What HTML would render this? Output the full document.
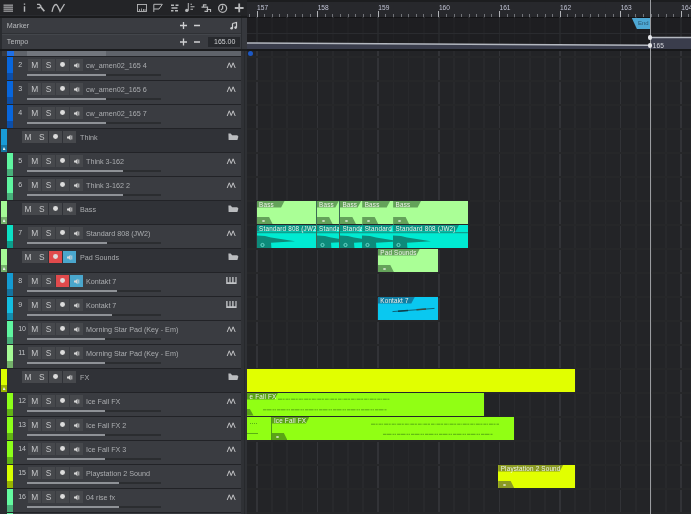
<!DOCTYPE html><html><head><meta charset="utf-8"><style>
*{margin:0;padding:0;box-sizing:border-box}
html,body{width:691px;height:514px;overflow:hidden;background:#222326;font-family:"Liberation Sans",sans-serif}
.a{position:absolute}
.btn{position:absolute;width:13px;height:12.5px;background:#46484c;color:#c4c5c7;font-size:8.4px;line-height:13px;text-align:center}
.nm{position:absolute;color:#abadb0;font-size:7.2px;letter-spacing:0px;white-space:nowrap;line-height:10px}
.num{position:absolute;color:#c2c4c7;font-size:7px;white-space:nowrap;line-height:10px}
.lbl{position:absolute;font-size:6.3px;letter-spacing:0.2px;white-space:nowrap;line-height:8px;color:#eef2ea}
</style></head><body>
<div style="position:absolute;left:0;top:0;width:691px;height:514px;overflow:hidden;will-change:transform;filter:blur(0.7px)">

<div class="a" style="left:0;top:0;width:241px;height:514px;background:#2a2c30"></div>
<div class="a" style="left:0;top:0;width:247px;height:15px;background:#232427"></div>
<div class="a" style="left:0;top:15.5px;width:247px;height:2.5px;background:#1a1b1d"></div>
<svg class="a" style="left:0;top:0" width="247" height="15" viewBox="0 0 247 15">
<g fill="none" stroke="#b6b7b9" stroke-width="1.1">
</g><g fill="#b6b7b9"><rect x="3.5" y="4.6" width="9.5" height="1.1"/><rect x="3.5" y="6.6" width="9.5" height="1.1"/><rect x="3.5" y="8.6" width="9.5" height="1.1"/><rect x="3.5" y="10.6" width="9.5" height="1.1"/></g><g fill="none" stroke="#b6b7b9" stroke-width="1.1">
<path d="M24.5 3.5V4.8M24.5 6.2V11.8" stroke-width="1.4"/>
<path d="M37 4.4 H39.4 L40.9 6.1 L39.4 7.8 H37.2" stroke-width="1.3"/><path d="M40.6 6.9 L44.4 11.2" stroke-width="1.7"/>
<path d="M52 11.8 C53 7 54.5 4.5 56 4.5 C57.5 4.5 58.5 8 60 11.3 L64.5 4" stroke-width="1.3"/>
<rect x="137.5" y="4.5" width="9" height="7" stroke-width="0.9"/>
<path d="M139.5 11V9M141.5 11V8.5M143.5 11V9M145 11V9" stroke-width="0.8"/>
<path d="M153.8 12V4.3H162.3L159 9H154" stroke-width="1.0"/>
<path d="M171 5.2H174M175.5 5.2H178.5M171.5 8H177.5M171 10.8H173.5M175 10.8H178" stroke-width="1.6" stroke-dasharray="none"/>
<path d="M188.3 3V10.5" stroke-width="1.0"/><circle cx="186.8" cy="10.4" r="1.7" fill="#b6b7b9" stroke="none"/>
<path d="M190.5 4.2H192M190.5 6.8H194.5M190.5 9.2H193" stroke-width="1.1"/>
<path d="M201.5 7.2H207.5V11.3H204.5M203.5 7.2V4.8H206.5M206.5 9.5H210.5V12" stroke-width="1.2"/>
<circle cx="222.6" cy="8.3" r="4.0" stroke-width="1.3"/><path d="M222.6 5.4V8.5L220.9 10.2" stroke-width="1.2"/>
<path d="M239.2 3.6V12.2M234.8 8H243.6" stroke-width="1.8"/>
</g></svg>
<div class="a" style="left:2px;top:18px;width:239px;height:31px;background:#3a3c41"></div>
<div class="a" style="left:2px;top:32.8px;width:239px;height:1.2px;background:#2f3135"></div>
<div class="a" style="left:2px;top:34px;width:239px;height:1px;background:#43464b"></div>
<div class="a" style="left:0;top:48.5px;width:247px;height:2.5px;background:#1b1c1e"></div>
<div class="nm" style="left:6.8px;top:21.3px;color:#b8babd">Marker</div>
<div class="nm" style="left:6.8px;top:37.3px;color:#b8babd">Tempo</div>
<svg class="a" style="left:175px;top:17px" width="66" height="32" viewBox="0 0 66 32"><g stroke="#cfd0d2" stroke-width="1.3" fill="none">
<path d="M5 8.5H12M8.5 5V12M19 8.5H25"/>
<path d="M5 25H12M8.5 21.5V28.5M19 25H25"/>
<path d="M57.5 6.5L61.5 5.5V10.5M57.5 6.5V11.2" stroke-width="1.2"/></g>
<circle cx="56.6" cy="11.3" r="1.3" fill="#cfd0d2"/><circle cx="60.6" cy="10.6" r="1.3" fill="#cfd0d2"/></svg>
<div class="a" style="left:208px;top:37px;width:32px;height:10px;background:#27292d"></div>
<div class="nm" style="left:214px;top:37px;font-size:7px;color:#d0d2d5">165.00</div>
<div class="a" style="left:2px;top:51px;width:239px;height:5px;background:#393b3f"></div>
<div class="a" style="left:7px;top:51px;width:6.5px;height:5px;background:#1f6fe6"></div>
<div class="a" style="left:14px;top:51px;width:227px;height:4.5px;background:#5f636a"></div>
<div class="a" style="left:27px;top:51px;width:79px;height:4.5px;background:#72767d"></div>
<div class="a" style="left:2px;top:56px;width:239px;height:24px;background:#3a3c41"></div>
<div class="a" style="left:0;top:56px;width:241px;height:1px;background:#222327"></div>
<div class="a" style="left:0;top:56px;width:7px;height:24px;background:#2b2d32"></div>
<div class="a" style="left:7px;top:57px;width:6.3px;height:23px;background:#0866dc"></div>
<div class="a" style="left:7px;top:73px;width:6.3px;height:7px;background:#0c4ea8"></div>
<div class="num" style="left:18.2px;top:59.6px">2</div>
<div class="btn" style="left:28.2px;top:58.5px;background:#46484c">M</div>
<div class="btn" style="left:42px;top:58.5px;background:#46484c">S</div>
<div class="btn" style="left:55.8px;top:58.5px;background:#46484c"><div class="a" style="left:3.8px;top:3.6px;width:5.4px;height:5.2px;border-radius:50%;background:#dcdcdc"></div></div>
<div class="btn" style="left:69.6px;top:58.5px;background:#46484c"><svg class="a" style="left:3px;top:3px" width="7" height="7" viewBox="0 0 7 7"><path d="M1 2.5H2.5L4.5 0.8V6.2L2.5 4.5H1Z" fill="#d6d6d6"/><path d="M5.8 1.5V5.5" stroke="#d6d6d6" stroke-width="0.9"/></svg></div>
<div class="nm" style="left:86px;top:60.5px">cw_amen02_165 4</div>
<div class="a" style="left:27px;top:74px;width:134px;height:2.3px;background:#2b2d30"></div>
<div class="a" style="left:27px;top:74px;width:79px;height:2.3px;background:#8f9297"></div>
<svg class="a" style="left:225px;top:59px" width="13" height="12" viewBox="0 0 13 12"><path d="M2.2 9 L4.3 3.8 L6.2 8.6 L8.1 3.8 L10.2 9" fill="none" stroke="#c0c1c3" stroke-width="1.0"/></svg>
<div class="a" style="left:2px;top:80px;width:239px;height:24px;background:#3a3c41"></div>
<div class="a" style="left:0;top:80px;width:241px;height:1px;background:#222327"></div>
<div class="a" style="left:0;top:80px;width:7px;height:24px;background:#2b2d32"></div>
<div class="a" style="left:7px;top:81px;width:6.3px;height:23px;background:#0866dc"></div>
<div class="a" style="left:7px;top:97px;width:6.3px;height:7px;background:#0c4ea8"></div>
<div class="num" style="left:18.2px;top:83.6px">3</div>
<div class="btn" style="left:28.2px;top:82.5px;background:#46484c">M</div>
<div class="btn" style="left:42px;top:82.5px;background:#46484c">S</div>
<div class="btn" style="left:55.8px;top:82.5px;background:#46484c"><div class="a" style="left:3.8px;top:3.6px;width:5.4px;height:5.2px;border-radius:50%;background:#dcdcdc"></div></div>
<div class="btn" style="left:69.6px;top:82.5px;background:#46484c"><svg class="a" style="left:3px;top:3px" width="7" height="7" viewBox="0 0 7 7"><path d="M1 2.5H2.5L4.5 0.8V6.2L2.5 4.5H1Z" fill="#d6d6d6"/><path d="M5.8 1.5V5.5" stroke="#d6d6d6" stroke-width="0.9"/></svg></div>
<div class="nm" style="left:86px;top:84.5px">cw_amen02_165 6</div>
<div class="a" style="left:27px;top:98px;width:134px;height:2.3px;background:#2b2d30"></div>
<div class="a" style="left:27px;top:98px;width:79px;height:2.3px;background:#8f9297"></div>
<svg class="a" style="left:225px;top:83px" width="13" height="12" viewBox="0 0 13 12"><path d="M2.2 9 L4.3 3.8 L6.2 8.6 L8.1 3.8 L10.2 9" fill="none" stroke="#c0c1c3" stroke-width="1.0"/></svg>
<div class="a" style="left:2px;top:104px;width:239px;height:24px;background:#3a3c41"></div>
<div class="a" style="left:0;top:104px;width:241px;height:1px;background:#222327"></div>
<div class="a" style="left:0;top:104px;width:7px;height:24px;background:#2b2d32"></div>
<div class="a" style="left:7px;top:105px;width:6.3px;height:23px;background:#0866dc"></div>
<div class="a" style="left:7px;top:121px;width:6.3px;height:7px;background:#0c4ea8"></div>
<div class="num" style="left:18.2px;top:107.6px">4</div>
<div class="btn" style="left:28.2px;top:106.5px;background:#46484c">M</div>
<div class="btn" style="left:42px;top:106.5px;background:#46484c">S</div>
<div class="btn" style="left:55.8px;top:106.5px;background:#46484c"><div class="a" style="left:3.8px;top:3.6px;width:5.4px;height:5.2px;border-radius:50%;background:#dcdcdc"></div></div>
<div class="btn" style="left:69.6px;top:106.5px;background:#46484c"><svg class="a" style="left:3px;top:3px" width="7" height="7" viewBox="0 0 7 7"><path d="M1 2.5H2.5L4.5 0.8V6.2L2.5 4.5H1Z" fill="#d6d6d6"/><path d="M5.8 1.5V5.5" stroke="#d6d6d6" stroke-width="0.9"/></svg></div>
<div class="nm" style="left:86px;top:108.5px">cw_amen02_165 7</div>
<div class="a" style="left:27px;top:122px;width:134px;height:2.3px;background:#2b2d30"></div>
<div class="a" style="left:27px;top:122px;width:79px;height:2.3px;background:#8f9297"></div>
<svg class="a" style="left:225px;top:107px" width="13" height="12" viewBox="0 0 13 12"><path d="M2.2 9 L4.3 3.8 L6.2 8.6 L8.1 3.8 L10.2 9" fill="none" stroke="#c0c1c3" stroke-width="1.0"/></svg>
<div class="a" style="left:2px;top:128px;width:239px;height:24px;background:#303237"></div>
<div class="a" style="left:0;top:128px;width:241px;height:1px;background:#222327"></div>
<div class="a" style="left:1px;top:129px;width:5.8px;height:23px;background:#199bd7"></div>
<div class="a" style="left:1px;top:145px;width:5.8px;height:7px;background:#1676a4"></div>
<div class="a" style="left:2.5px;top:147px;width:3px;height:3px;background:#e8f0f0;clip-path:polygon(50% 0,100% 100%,0 100%)"></div>
<div class="btn" style="left:21.6px;top:130.5px;background:#46484c">M</div>
<div class="btn" style="left:35.4px;top:130.5px;background:#46484c">S</div>
<div class="btn" style="left:49.2px;top:130.5px;background:#46484c"><div class="a" style="left:3.8px;top:3.6px;width:5.4px;height:5.2px;border-radius:50%;background:#dcdcdc"></div></div>
<div class="btn" style="left:63.0px;top:130.5px;background:#46484c"><svg class="a" style="left:3px;top:3px" width="7" height="7" viewBox="0 0 7 7"><path d="M1 2.5H2.5L4.5 0.8V6.2L2.5 4.5H1Z" fill="#d6d6d6"/><path d="M5.8 1.5V5.5" stroke="#d6d6d6" stroke-width="0.9"/></svg></div>
<div class="nm" style="left:80px;top:132.5px">Think</div>
<svg class="a" style="left:227.5px;top:133px" width="11" height="8" viewBox="0 0 11 8"><path d="M0.4 0.6 H2.6 L4.2 2.2 H9.2 L10.4 3.6 L9.4 7 H0.6Z" fill="#babcbf"/></svg>
<div class="a" style="left:2px;top:152px;width:239px;height:24px;background:#3a3c41"></div>
<div class="a" style="left:0;top:152px;width:241px;height:1px;background:#222327"></div>
<div class="a" style="left:0;top:152px;width:7px;height:24px;background:#2b2d32"></div>
<div class="a" style="left:7px;top:153px;width:6.3px;height:23px;background:#5ff5a0"></div>
<div class="a" style="left:7px;top:169px;width:6.3px;height:7px;background:#48b07a"></div>
<div class="num" style="left:18.2px;top:155.6px">5</div>
<div class="btn" style="left:28.2px;top:154.5px;background:#46484c">M</div>
<div class="btn" style="left:42px;top:154.5px;background:#46484c">S</div>
<div class="btn" style="left:55.8px;top:154.5px;background:#46484c"><div class="a" style="left:3.8px;top:3.6px;width:5.4px;height:5.2px;border-radius:50%;background:#dcdcdc"></div></div>
<div class="btn" style="left:69.6px;top:154.5px;background:#46484c"><svg class="a" style="left:3px;top:3px" width="7" height="7" viewBox="0 0 7 7"><path d="M1 2.5H2.5L4.5 0.8V6.2L2.5 4.5H1Z" fill="#d6d6d6"/><path d="M5.8 1.5V5.5" stroke="#d6d6d6" stroke-width="0.9"/></svg></div>
<div class="nm" style="left:86px;top:156.5px">Think 3-162</div>
<div class="a" style="left:27px;top:170px;width:134px;height:2.3px;background:#2b2d30"></div>
<div class="a" style="left:27px;top:170px;width:96px;height:2.3px;background:#8f9297"></div>
<svg class="a" style="left:225px;top:155px" width="13" height="12" viewBox="0 0 13 12"><path d="M2.2 9 L4.3 3.8 L6.2 8.6 L8.1 3.8 L10.2 9" fill="none" stroke="#c0c1c3" stroke-width="1.0"/></svg>
<div class="a" style="left:2px;top:176px;width:239px;height:24px;background:#3a3c41"></div>
<div class="a" style="left:0;top:176px;width:241px;height:1px;background:#222327"></div>
<div class="a" style="left:0;top:176px;width:7px;height:24px;background:#2b2d32"></div>
<div class="a" style="left:7px;top:177px;width:6.3px;height:23px;background:#5ff5a0"></div>
<div class="a" style="left:7px;top:193px;width:6.3px;height:7px;background:#48b07a"></div>
<div class="num" style="left:18.2px;top:179.6px">6</div>
<div class="btn" style="left:28.2px;top:178.5px;background:#46484c">M</div>
<div class="btn" style="left:42px;top:178.5px;background:#46484c">S</div>
<div class="btn" style="left:55.8px;top:178.5px;background:#46484c"><div class="a" style="left:3.8px;top:3.6px;width:5.4px;height:5.2px;border-radius:50%;background:#dcdcdc"></div></div>
<div class="btn" style="left:69.6px;top:178.5px;background:#46484c"><svg class="a" style="left:3px;top:3px" width="7" height="7" viewBox="0 0 7 7"><path d="M1 2.5H2.5L4.5 0.8V6.2L2.5 4.5H1Z" fill="#d6d6d6"/><path d="M5.8 1.5V5.5" stroke="#d6d6d6" stroke-width="0.9"/></svg></div>
<div class="nm" style="left:86px;top:180.5px">Think 3-162 2</div>
<div class="a" style="left:27px;top:194px;width:134px;height:2.3px;background:#2b2d30"></div>
<div class="a" style="left:27px;top:194px;width:96px;height:2.3px;background:#8f9297"></div>
<svg class="a" style="left:225px;top:179px" width="13" height="12" viewBox="0 0 13 12"><path d="M2.2 9 L4.3 3.8 L6.2 8.6 L8.1 3.8 L10.2 9" fill="none" stroke="#c0c1c3" stroke-width="1.0"/></svg>
<div class="a" style="left:2px;top:200px;width:239px;height:24px;background:#303237"></div>
<div class="a" style="left:0;top:200px;width:241px;height:1px;background:#222327"></div>
<div class="a" style="left:1px;top:201px;width:5.8px;height:23px;background:#a5fa96"></div>
<div class="a" style="left:1px;top:217px;width:5.8px;height:7px;background:#74b06a"></div>
<div class="a" style="left:2.5px;top:219px;width:3px;height:3px;background:#e8f0f0;clip-path:polygon(50% 0,100% 100%,0 100%)"></div>
<div class="btn" style="left:21.6px;top:202.5px;background:#46484c">M</div>
<div class="btn" style="left:35.4px;top:202.5px;background:#46484c">S</div>
<div class="btn" style="left:49.2px;top:202.5px;background:#46484c"><div class="a" style="left:3.8px;top:3.6px;width:5.4px;height:5.2px;border-radius:50%;background:#dcdcdc"></div></div>
<div class="btn" style="left:63.0px;top:202.5px;background:#46484c"><svg class="a" style="left:3px;top:3px" width="7" height="7" viewBox="0 0 7 7"><path d="M1 2.5H2.5L4.5 0.8V6.2L2.5 4.5H1Z" fill="#d6d6d6"/><path d="M5.8 1.5V5.5" stroke="#d6d6d6" stroke-width="0.9"/></svg></div>
<div class="nm" style="left:80px;top:204.5px">Bass</div>
<svg class="a" style="left:227.5px;top:205px" width="11" height="8" viewBox="0 0 11 8"><path d="M0.4 0.6 H2.6 L4.2 2.2 H9.2 L10.4 3.6 L9.4 7 H0.6Z" fill="#babcbf"/></svg>
<div class="a" style="left:2px;top:224px;width:239px;height:24px;background:#3a3c41"></div>
<div class="a" style="left:0;top:224px;width:241px;height:1px;background:#222327"></div>
<div class="a" style="left:0;top:224px;width:7px;height:24px;background:#2b2d32"></div>
<div class="a" style="left:7px;top:225px;width:6.3px;height:23px;background:#0ce0c4"></div>
<div class="a" style="left:7px;top:241px;width:6.3px;height:7px;background:#0c9e8c"></div>
<div class="num" style="left:18.2px;top:227.6px">7</div>
<div class="btn" style="left:28.2px;top:226.5px;background:#46484c">M</div>
<div class="btn" style="left:42px;top:226.5px;background:#46484c">S</div>
<div class="btn" style="left:55.8px;top:226.5px;background:#46484c"><div class="a" style="left:3.8px;top:3.6px;width:5.4px;height:5.2px;border-radius:50%;background:#dcdcdc"></div></div>
<div class="btn" style="left:69.6px;top:226.5px;background:#46484c"><svg class="a" style="left:3px;top:3px" width="7" height="7" viewBox="0 0 7 7"><path d="M1 2.5H2.5L4.5 0.8V6.2L2.5 4.5H1Z" fill="#d6d6d6"/><path d="M5.8 1.5V5.5" stroke="#d6d6d6" stroke-width="0.9"/></svg></div>
<div class="nm" style="left:86px;top:228.5px">Standard 808 (JW2)</div>
<div class="a" style="left:27px;top:242px;width:134px;height:2.3px;background:#2b2d30"></div>
<div class="a" style="left:27px;top:242px;width:80px;height:2.3px;background:#8f9297"></div>
<svg class="a" style="left:225px;top:227px" width="13" height="12" viewBox="0 0 13 12"><path d="M2.2 9 L4.3 3.8 L6.2 8.6 L8.1 3.8 L10.2 9" fill="none" stroke="#c0c1c3" stroke-width="1.0"/></svg>
<div class="a" style="left:2px;top:248px;width:239px;height:24px;background:#303237"></div>
<div class="a" style="left:0;top:248px;width:241px;height:1px;background:#222327"></div>
<div class="a" style="left:1px;top:249px;width:5.8px;height:23px;background:#a5fa96"></div>
<div class="a" style="left:1px;top:265px;width:5.8px;height:7px;background:#74b06a"></div>
<div class="a" style="left:2.5px;top:267px;width:3px;height:3px;background:#e8f0f0;clip-path:polygon(50% 0,100% 100%,0 100%)"></div>
<div class="btn" style="left:21.6px;top:250.5px;background:#46484c">M</div>
<div class="btn" style="left:35.4px;top:250.5px;background:#46484c">S</div>
<div class="btn" style="left:49.2px;top:250.5px;background:#e04a4c"><div class="a" style="left:3.8px;top:3.6px;width:5.4px;height:5.2px;border-radius:50%;background:#dcdcdc"></div></div>
<div class="btn" style="left:63.0px;top:250.5px;background:#4aa6cc"><svg class="a" style="left:3px;top:3px" width="7" height="7" viewBox="0 0 7 7"><path d="M1 2.5H2.5L4.5 0.8V6.2L2.5 4.5H1Z" fill="#d6d6d6"/><path d="M5.8 1.5V5.5" stroke="#d6d6d6" stroke-width="0.9"/></svg></div>
<div class="nm" style="left:80px;top:252.5px">Pad Sounds</div>
<svg class="a" style="left:227.5px;top:253px" width="11" height="8" viewBox="0 0 11 8"><path d="M0.4 0.6 H2.6 L4.2 2.2 H9.2 L10.4 3.6 L9.4 7 H0.6Z" fill="#babcbf"/></svg>
<div class="a" style="left:2px;top:272px;width:239px;height:24px;background:#3a3c41"></div>
<div class="a" style="left:0;top:272px;width:241px;height:1px;background:#222327"></div>
<div class="a" style="left:0;top:272px;width:7px;height:24px;background:#2b2d32"></div>
<div class="a" style="left:7px;top:273px;width:6.3px;height:23px;background:#149bd2"></div>
<div class="a" style="left:7px;top:289px;width:6.3px;height:7px;background:#1474a0"></div>
<div class="num" style="left:18.2px;top:275.6px">8</div>
<div class="btn" style="left:28.2px;top:274.5px;background:#46484c">M</div>
<div class="btn" style="left:42px;top:274.5px;background:#46484c">S</div>
<div class="btn" style="left:55.8px;top:274.5px;background:#e04a4c"><div class="a" style="left:3.8px;top:3.6px;width:5.4px;height:5.2px;border-radius:50%;background:#dcdcdc"></div></div>
<div class="btn" style="left:69.6px;top:274.5px;background:#4aa6cc"><svg class="a" style="left:3px;top:3px" width="7" height="7" viewBox="0 0 7 7"><path d="M1 2.5H2.5L4.5 0.8V6.2L2.5 4.5H1Z" fill="#d6d6d6"/><path d="M5.8 1.5V5.5" stroke="#d6d6d6" stroke-width="0.9"/></svg></div>
<div class="nm" style="left:86px;top:276.5px">Kontakt 7</div>
<div class="a" style="left:27px;top:290px;width:134px;height:2.3px;background:#2b2d30"></div>
<div class="a" style="left:27px;top:290px;width:90px;height:2.3px;background:#8f9297"></div>
<svg class="a" style="left:225.6px;top:277px" width="11" height="8" viewBox="0 0 11 8"><path d="M0.2 0 H10.6 V7 H0.2Z" fill="#c2c4c7"/><path d="M1.6 0 H3.4 V5.2 H1.6Z M4.6 0 H6.2 V5.2 H4.6Z M7.6 0 H9.4 V5.2 H7.6Z" fill="#3a3c41"/></svg>
<div class="a" style="left:2px;top:296px;width:239px;height:24px;background:#3a3c41"></div>
<div class="a" style="left:0;top:296px;width:241px;height:1px;background:#222327"></div>
<div class="a" style="left:0;top:296px;width:7px;height:24px;background:#2b2d32"></div>
<div class="a" style="left:7px;top:297px;width:6.3px;height:23px;background:#14bee1"></div>
<div class="a" style="left:7px;top:313px;width:6.3px;height:7px;background:#148cac"></div>
<div class="num" style="left:18.2px;top:299.6px">9</div>
<div class="btn" style="left:28.2px;top:298.5px;background:#46484c">M</div>
<div class="btn" style="left:42px;top:298.5px;background:#46484c">S</div>
<div class="btn" style="left:55.8px;top:298.5px;background:#46484c"><div class="a" style="left:3.8px;top:3.6px;width:5.4px;height:5.2px;border-radius:50%;background:#dcdcdc"></div></div>
<div class="btn" style="left:69.6px;top:298.5px;background:#46484c"><svg class="a" style="left:3px;top:3px" width="7" height="7" viewBox="0 0 7 7"><path d="M1 2.5H2.5L4.5 0.8V6.2L2.5 4.5H1Z" fill="#d6d6d6"/><path d="M5.8 1.5V5.5" stroke="#d6d6d6" stroke-width="0.9"/></svg></div>
<div class="nm" style="left:86px;top:300.5px">Kontakt 7</div>
<div class="a" style="left:27px;top:314px;width:134px;height:2.3px;background:#2b2d30"></div>
<div class="a" style="left:27px;top:314px;width:85px;height:2.3px;background:#8f9297"></div>
<svg class="a" style="left:225.6px;top:301px" width="11" height="8" viewBox="0 0 11 8"><path d="M0.2 0 H10.6 V7 H0.2Z" fill="#c2c4c7"/><path d="M1.6 0 H3.4 V5.2 H1.6Z M4.6 0 H6.2 V5.2 H4.6Z M7.6 0 H9.4 V5.2 H7.6Z" fill="#3a3c41"/></svg>
<div class="a" style="left:2px;top:320px;width:239px;height:24px;background:#3a3c41"></div>
<div class="a" style="left:0;top:320px;width:241px;height:1px;background:#222327"></div>
<div class="a" style="left:0;top:320px;width:7px;height:24px;background:#2b2d32"></div>
<div class="a" style="left:7px;top:321px;width:6.3px;height:23px;background:#5ff5a0"></div>
<div class="a" style="left:7px;top:337px;width:6.3px;height:7px;background:#48b07a"></div>
<div class="num" style="left:18.2px;top:323.6px">10</div>
<div class="btn" style="left:28.2px;top:322.5px;background:#46484c">M</div>
<div class="btn" style="left:42px;top:322.5px;background:#46484c">S</div>
<div class="btn" style="left:55.8px;top:322.5px;background:#46484c"><div class="a" style="left:3.8px;top:3.6px;width:5.4px;height:5.2px;border-radius:50%;background:#dcdcdc"></div></div>
<div class="btn" style="left:69.6px;top:322.5px;background:#46484c"><svg class="a" style="left:3px;top:3px" width="7" height="7" viewBox="0 0 7 7"><path d="M1 2.5H2.5L4.5 0.8V6.2L2.5 4.5H1Z" fill="#d6d6d6"/><path d="M5.8 1.5V5.5" stroke="#d6d6d6" stroke-width="0.9"/></svg></div>
<div class="nm" style="left:86px;top:324.5px">Morning Star Pad (Key - Em)</div>
<div class="a" style="left:27px;top:338px;width:134px;height:2.3px;background:#2b2d30"></div>
<div class="a" style="left:27px;top:338px;width:78px;height:2.3px;background:#8f9297"></div>
<svg class="a" style="left:225px;top:323px" width="13" height="12" viewBox="0 0 13 12"><path d="M2.2 9 L4.3 3.8 L6.2 8.6 L8.1 3.8 L10.2 9" fill="none" stroke="#c0c1c3" stroke-width="1.0"/></svg>
<div class="a" style="left:2px;top:344px;width:239px;height:24px;background:#3a3c41"></div>
<div class="a" style="left:0;top:344px;width:241px;height:1px;background:#222327"></div>
<div class="a" style="left:0;top:344px;width:7px;height:24px;background:#2b2d32"></div>
<div class="a" style="left:7px;top:345px;width:6.3px;height:23px;background:#a5fa96"></div>
<div class="a" style="left:7px;top:361px;width:6.3px;height:7px;background:#74b06a"></div>
<div class="num" style="left:18.2px;top:347.6px">11</div>
<div class="btn" style="left:28.2px;top:346.5px;background:#46484c">M</div>
<div class="btn" style="left:42px;top:346.5px;background:#46484c">S</div>
<div class="btn" style="left:55.8px;top:346.5px;background:#46484c"><div class="a" style="left:3.8px;top:3.6px;width:5.4px;height:5.2px;border-radius:50%;background:#dcdcdc"></div></div>
<div class="btn" style="left:69.6px;top:346.5px;background:#46484c"><svg class="a" style="left:3px;top:3px" width="7" height="7" viewBox="0 0 7 7"><path d="M1 2.5H2.5L4.5 0.8V6.2L2.5 4.5H1Z" fill="#d6d6d6"/><path d="M5.8 1.5V5.5" stroke="#d6d6d6" stroke-width="0.9"/></svg></div>
<div class="nm" style="left:86px;top:348.5px">Morning Star Pad (Key - Em)</div>
<div class="a" style="left:27px;top:362px;width:134px;height:2.3px;background:#2b2d30"></div>
<div class="a" style="left:27px;top:362px;width:78px;height:2.3px;background:#8f9297"></div>
<svg class="a" style="left:225px;top:347px" width="13" height="12" viewBox="0 0 13 12"><path d="M2.2 9 L4.3 3.8 L6.2 8.6 L8.1 3.8 L10.2 9" fill="none" stroke="#c0c1c3" stroke-width="1.0"/></svg>
<div class="a" style="left:2px;top:368px;width:239px;height:24px;background:#303237"></div>
<div class="a" style="left:0;top:368px;width:241px;height:1px;background:#222327"></div>
<div class="a" style="left:1px;top:369px;width:5.8px;height:23px;background:#dcff00"></div>
<div class="a" style="left:1px;top:385px;width:5.8px;height:7px;background:#9cb400"></div>
<div class="a" style="left:2.5px;top:387px;width:3px;height:3px;background:#e8f0f0;clip-path:polygon(50% 0,100% 100%,0 100%)"></div>
<div class="btn" style="left:21.6px;top:370.5px;background:#46484c">M</div>
<div class="btn" style="left:35.4px;top:370.5px;background:#46484c">S</div>
<div class="btn" style="left:49.2px;top:370.5px;background:#46484c"><div class="a" style="left:3.8px;top:3.6px;width:5.4px;height:5.2px;border-radius:50%;background:#dcdcdc"></div></div>
<div class="btn" style="left:63.0px;top:370.5px;background:#46484c"><svg class="a" style="left:3px;top:3px" width="7" height="7" viewBox="0 0 7 7"><path d="M1 2.5H2.5L4.5 0.8V6.2L2.5 4.5H1Z" fill="#d6d6d6"/><path d="M5.8 1.5V5.5" stroke="#d6d6d6" stroke-width="0.9"/></svg></div>
<div class="nm" style="left:80px;top:372.5px">FX</div>
<svg class="a" style="left:227.5px;top:373px" width="11" height="8" viewBox="0 0 11 8"><path d="M0.4 0.6 H2.6 L4.2 2.2 H9.2 L10.4 3.6 L9.4 7 H0.6Z" fill="#babcbf"/></svg>
<div class="a" style="left:2px;top:392px;width:239px;height:24px;background:#3a3c41"></div>
<div class="a" style="left:0;top:392px;width:241px;height:1px;background:#222327"></div>
<div class="a" style="left:0;top:392px;width:7px;height:24px;background:#2b2d32"></div>
<div class="a" style="left:7px;top:393px;width:6.3px;height:23px;background:#8cff19"></div>
<div class="a" style="left:7px;top:409px;width:6.3px;height:7px;background:#62b414"></div>
<div class="num" style="left:18.2px;top:395.6px">12</div>
<div class="btn" style="left:28.2px;top:394.5px;background:#46484c">M</div>
<div class="btn" style="left:42px;top:394.5px;background:#46484c">S</div>
<div class="btn" style="left:55.8px;top:394.5px;background:#46484c"><div class="a" style="left:3.8px;top:3.6px;width:5.4px;height:5.2px;border-radius:50%;background:#dcdcdc"></div></div>
<div class="btn" style="left:69.6px;top:394.5px;background:#46484c"><svg class="a" style="left:3px;top:3px" width="7" height="7" viewBox="0 0 7 7"><path d="M1 2.5H2.5L4.5 0.8V6.2L2.5 4.5H1Z" fill="#d6d6d6"/><path d="M5.8 1.5V5.5" stroke="#d6d6d6" stroke-width="0.9"/></svg></div>
<div class="nm" style="left:86px;top:396.5px">Ice Fall FX</div>
<div class="a" style="left:27px;top:410px;width:134px;height:2.3px;background:#2b2d30"></div>
<div class="a" style="left:27px;top:410px;width:78px;height:2.3px;background:#8f9297"></div>
<svg class="a" style="left:225px;top:395px" width="13" height="12" viewBox="0 0 13 12"><path d="M2.2 9 L4.3 3.8 L6.2 8.6 L8.1 3.8 L10.2 9" fill="none" stroke="#c0c1c3" stroke-width="1.0"/></svg>
<div class="a" style="left:2px;top:416px;width:239px;height:24px;background:#3a3c41"></div>
<div class="a" style="left:0;top:416px;width:241px;height:1px;background:#222327"></div>
<div class="a" style="left:0;top:416px;width:7px;height:24px;background:#2b2d32"></div>
<div class="a" style="left:7px;top:417px;width:6.3px;height:23px;background:#8cff19"></div>
<div class="a" style="left:7px;top:433px;width:6.3px;height:7px;background:#62b414"></div>
<div class="num" style="left:18.2px;top:419.6px">13</div>
<div class="btn" style="left:28.2px;top:418.5px;background:#46484c">M</div>
<div class="btn" style="left:42px;top:418.5px;background:#46484c">S</div>
<div class="btn" style="left:55.8px;top:418.5px;background:#46484c"><div class="a" style="left:3.8px;top:3.6px;width:5.4px;height:5.2px;border-radius:50%;background:#dcdcdc"></div></div>
<div class="btn" style="left:69.6px;top:418.5px;background:#46484c"><svg class="a" style="left:3px;top:3px" width="7" height="7" viewBox="0 0 7 7"><path d="M1 2.5H2.5L4.5 0.8V6.2L2.5 4.5H1Z" fill="#d6d6d6"/><path d="M5.8 1.5V5.5" stroke="#d6d6d6" stroke-width="0.9"/></svg></div>
<div class="nm" style="left:86px;top:420.5px">Ice Fall FX 2</div>
<div class="a" style="left:27px;top:434px;width:134px;height:2.3px;background:#2b2d30"></div>
<div class="a" style="left:27px;top:434px;width:78px;height:2.3px;background:#8f9297"></div>
<svg class="a" style="left:225px;top:419px" width="13" height="12" viewBox="0 0 13 12"><path d="M2.2 9 L4.3 3.8 L6.2 8.6 L8.1 3.8 L10.2 9" fill="none" stroke="#c0c1c3" stroke-width="1.0"/></svg>
<div class="a" style="left:2px;top:440px;width:239px;height:24px;background:#3a3c41"></div>
<div class="a" style="left:0;top:440px;width:241px;height:1px;background:#222327"></div>
<div class="a" style="left:0;top:440px;width:7px;height:24px;background:#2b2d32"></div>
<div class="a" style="left:7px;top:441px;width:6.3px;height:23px;background:#8cff19"></div>
<div class="a" style="left:7px;top:457px;width:6.3px;height:7px;background:#62b414"></div>
<div class="num" style="left:18.2px;top:443.6px">14</div>
<div class="btn" style="left:28.2px;top:442.5px;background:#46484c">M</div>
<div class="btn" style="left:42px;top:442.5px;background:#46484c">S</div>
<div class="btn" style="left:55.8px;top:442.5px;background:#46484c"><div class="a" style="left:3.8px;top:3.6px;width:5.4px;height:5.2px;border-radius:50%;background:#dcdcdc"></div></div>
<div class="btn" style="left:69.6px;top:442.5px;background:#46484c"><svg class="a" style="left:3px;top:3px" width="7" height="7" viewBox="0 0 7 7"><path d="M1 2.5H2.5L4.5 0.8V6.2L2.5 4.5H1Z" fill="#d6d6d6"/><path d="M5.8 1.5V5.5" stroke="#d6d6d6" stroke-width="0.9"/></svg></div>
<div class="nm" style="left:86px;top:444.5px">Ice Fall FX 3</div>
<div class="a" style="left:27px;top:458px;width:134px;height:2.3px;background:#2b2d30"></div>
<div class="a" style="left:27px;top:458px;width:78px;height:2.3px;background:#8f9297"></div>
<svg class="a" style="left:225px;top:443px" width="13" height="12" viewBox="0 0 13 12"><path d="M2.2 9 L4.3 3.8 L6.2 8.6 L8.1 3.8 L10.2 9" fill="none" stroke="#c0c1c3" stroke-width="1.0"/></svg>
<div class="a" style="left:2px;top:464px;width:239px;height:24px;background:#3a3c41"></div>
<div class="a" style="left:0;top:464px;width:241px;height:1px;background:#222327"></div>
<div class="a" style="left:0;top:464px;width:7px;height:24px;background:#2b2d32"></div>
<div class="a" style="left:7px;top:465px;width:6.3px;height:23px;background:#d7ff00"></div>
<div class="a" style="left:7px;top:481px;width:6.3px;height:7px;background:#98b400"></div>
<div class="num" style="left:18.2px;top:467.6px">15</div>
<div class="btn" style="left:28.2px;top:466.5px;background:#46484c">M</div>
<div class="btn" style="left:42px;top:466.5px;background:#46484c">S</div>
<div class="btn" style="left:55.8px;top:466.5px;background:#46484c"><div class="a" style="left:3.8px;top:3.6px;width:5.4px;height:5.2px;border-radius:50%;background:#dcdcdc"></div></div>
<div class="btn" style="left:69.6px;top:466.5px;background:#46484c"><svg class="a" style="left:3px;top:3px" width="7" height="7" viewBox="0 0 7 7"><path d="M1 2.5H2.5L4.5 0.8V6.2L2.5 4.5H1Z" fill="#d6d6d6"/><path d="M5.8 1.5V5.5" stroke="#d6d6d6" stroke-width="0.9"/></svg></div>
<div class="nm" style="left:86px;top:468.5px">Playstation 2 Sound</div>
<div class="a" style="left:27px;top:482px;width:134px;height:2.3px;background:#2b2d30"></div>
<div class="a" style="left:27px;top:482px;width:92px;height:2.3px;background:#8f9297"></div>
<svg class="a" style="left:225px;top:467px" width="13" height="12" viewBox="0 0 13 12"><path d="M2.2 9 L4.3 3.8 L6.2 8.6 L8.1 3.8 L10.2 9" fill="none" stroke="#c0c1c3" stroke-width="1.0"/></svg>
<div class="a" style="left:2px;top:488px;width:239px;height:24px;background:#3a3c41"></div>
<div class="a" style="left:0;top:488px;width:241px;height:1px;background:#222327"></div>
<div class="a" style="left:0;top:488px;width:7px;height:24px;background:#2b2d32"></div>
<div class="a" style="left:7px;top:489px;width:6.3px;height:23px;background:#64faa0"></div>
<div class="a" style="left:7px;top:505px;width:6.3px;height:7px;background:#4ab07a"></div>
<div class="num" style="left:18.2px;top:491.6px">16</div>
<div class="btn" style="left:28.2px;top:490.5px;background:#46484c">M</div>
<div class="btn" style="left:42px;top:490.5px;background:#46484c">S</div>
<div class="btn" style="left:55.8px;top:490.5px;background:#46484c"><div class="a" style="left:3.8px;top:3.6px;width:5.4px;height:5.2px;border-radius:50%;background:#dcdcdc"></div></div>
<div class="btn" style="left:69.6px;top:490.5px;background:#46484c"><svg class="a" style="left:3px;top:3px" width="7" height="7" viewBox="0 0 7 7"><path d="M1 2.5H2.5L4.5 0.8V6.2L2.5 4.5H1Z" fill="#d6d6d6"/><path d="M5.8 1.5V5.5" stroke="#d6d6d6" stroke-width="0.9"/></svg></div>
<div class="nm" style="left:86px;top:492.5px">04 rise fx</div>
<div class="a" style="left:27px;top:506px;width:134px;height:2.3px;background:#2b2d30"></div>
<div class="a" style="left:27px;top:506px;width:92px;height:2.3px;background:#8f9297"></div>
<svg class="a" style="left:225px;top:491px" width="13" height="12" viewBox="0 0 13 12"><path d="M2.2 9 L4.3 3.8 L6.2 8.6 L8.1 3.8 L10.2 9" fill="none" stroke="#c0c1c3" stroke-width="1.0"/></svg>
<div class="a" style="left:2px;top:512px;width:239px;height:24px;background:#3a3c41"></div>
<div class="a" style="left:0;top:512px;width:241px;height:1px;background:#222327"></div>
<div class="a" style="left:0;top:512px;width:7px;height:24px;background:#2b2d32"></div>
<div class="a" style="left:7px;top:513px;width:6.3px;height:23px;background:#64faa0"></div>
<div class="a" style="left:7px;top:529px;width:6.3px;height:7px;background:#4ab07a"></div>
<div class="num" style="left:18.2px;top:515.6px"></div>
<div class="btn" style="left:28.2px;top:514.5px;background:#46484c">M</div>
<div class="btn" style="left:42px;top:514.5px;background:#46484c">S</div>
<div class="btn" style="left:55.8px;top:514.5px;background:#46484c"><div class="a" style="left:3.8px;top:3.6px;width:5.4px;height:5.2px;border-radius:50%;background:#dcdcdc"></div></div>
<div class="btn" style="left:69.6px;top:514.5px;background:#46484c"><svg class="a" style="left:3px;top:3px" width="7" height="7" viewBox="0 0 7 7"><path d="M1 2.5H2.5L4.5 0.8V6.2L2.5 4.5H1Z" fill="#d6d6d6"/><path d="M5.8 1.5V5.5" stroke="#d6d6d6" stroke-width="0.9"/></svg></div>
<div class="nm" style="left:86px;top:516.5px"></div>
<div class="a" style="left:27px;top:530px;width:134px;height:2.3px;background:#2b2d30"></div>
<div class="a" style="left:27px;top:530px;width:83px;height:2.3px;background:#8f9297"></div>
<svg class="a" style="left:225px;top:515px" width="13" height="12" viewBox="0 0 13 12"><path d="M2.2 9 L4.3 3.8 L6.2 8.6 L8.1 3.8 L10.2 9" fill="none" stroke="#c0c1c3" stroke-width="1.0"/></svg>
<div class="a" style="left:241px;top:18px;width:6px;height:31px;background:#36383d"></div>
<div class="a" style="left:241px;top:18px;width:1px;height:31px;background:#2a2c30"></div>
<div class="a" style="left:241px;top:51px;width:6px;height:463px;background:#2f3135"></div>
<div class="a" style="left:244px;top:51px;width:1px;height:463px;background:#27292c"></div>
<div class="a" style="left:247px;top:0;width:444px;height:514px;background:#232427;overflow:hidden">
<div class="a" style="left:0;top:0;width:444px;height:2px;background:#1c1d1f"></div>
<div class="a" style="left:0;top:2px;width:444px;height:14.5px;background:#27282c"></div>
<div class="a" style="left:0;top:16.8px;width:444px;height:1.5px;background:#141416"></div>
<div class="a" style="left:9.1px;top:17px;width:1.8px;height:497px;background:#323337"></div>
<div class="a" style="left:24.2px;top:17px;width:1.8px;height:497px;background:#28292c"></div>
<div class="a" style="left:39.4px;top:17px;width:1.8px;height:497px;background:#28292c"></div>
<div class="a" style="left:54.6px;top:17px;width:1.8px;height:497px;background:#28292c"></div>
<div class="a" style="left:69.7px;top:17px;width:1.8px;height:497px;background:#323337"></div>
<div class="a" style="left:84.9px;top:17px;width:1.8px;height:497px;background:#28292c"></div>
<div class="a" style="left:100.0px;top:17px;width:1.8px;height:497px;background:#28292c"></div>
<div class="a" style="left:115.2px;top:17px;width:1.8px;height:497px;background:#28292c"></div>
<div class="a" style="left:130.3px;top:17px;width:1.8px;height:497px;background:#323337"></div>
<div class="a" style="left:145.5px;top:17px;width:1.8px;height:497px;background:#28292c"></div>
<div class="a" style="left:160.6px;top:17px;width:1.8px;height:497px;background:#28292c"></div>
<div class="a" style="left:175.8px;top:17px;width:1.8px;height:497px;background:#28292c"></div>
<div class="a" style="left:190.9px;top:17px;width:1.8px;height:497px;background:#323337"></div>
<div class="a" style="left:206.1px;top:17px;width:1.8px;height:497px;background:#28292c"></div>
<div class="a" style="left:221.2px;top:17px;width:1.8px;height:497px;background:#28292c"></div>
<div class="a" style="left:236.4px;top:17px;width:1.8px;height:497px;background:#28292c"></div>
<div class="a" style="left:251.5px;top:17px;width:1.8px;height:497px;background:#323337"></div>
<div class="a" style="left:266.7px;top:17px;width:1.8px;height:497px;background:#28292c"></div>
<div class="a" style="left:281.8px;top:17px;width:1.8px;height:497px;background:#28292c"></div>
<div class="a" style="left:297.0px;top:17px;width:1.8px;height:497px;background:#28292c"></div>
<div class="a" style="left:312.1px;top:17px;width:1.8px;height:497px;background:#323337"></div>
<div class="a" style="left:327.2px;top:17px;width:1.8px;height:497px;background:#28292c"></div>
<div class="a" style="left:342.4px;top:17px;width:1.8px;height:497px;background:#28292c"></div>
<div class="a" style="left:357.5px;top:17px;width:1.8px;height:497px;background:#28292c"></div>
<div class="a" style="left:372.7px;top:17px;width:1.8px;height:497px;background:#323337"></div>
<div class="a" style="left:387.9px;top:17px;width:1.8px;height:497px;background:#28292c"></div>
<div class="a" style="left:403.0px;top:17px;width:1.8px;height:497px;background:#28292c"></div>
<div class="a" style="left:418.2px;top:17px;width:1.8px;height:497px;background:#28292c"></div>
<div class="a" style="left:433.3px;top:17px;width:1.8px;height:497px;background:#323337"></div>
<div class="a" style="left:0;top:56.2px;width:444px;height:1.4px;background:#262729"></div>
<div class="a" style="left:0;top:80.2px;width:444px;height:1.4px;background:#262729"></div>
<div class="a" style="left:0;top:104.2px;width:444px;height:1.4px;background:#262729"></div>
<div class="a" style="left:0;top:128.2px;width:444px;height:1.4px;background:#262729"></div>
<div class="a" style="left:0;top:152.2px;width:444px;height:1.4px;background:#262729"></div>
<div class="a" style="left:0;top:176.2px;width:444px;height:1.4px;background:#262729"></div>
<div class="a" style="left:0;top:200.2px;width:444px;height:1.4px;background:#262729"></div>
<div class="a" style="left:0;top:224.2px;width:444px;height:1.4px;background:#262729"></div>
<div class="a" style="left:0;top:248.2px;width:444px;height:1.4px;background:#262729"></div>
<div class="a" style="left:0;top:272.2px;width:444px;height:1.4px;background:#262729"></div>
<div class="a" style="left:0;top:296.2px;width:444px;height:1.4px;background:#262729"></div>
<div class="a" style="left:0;top:320.2px;width:444px;height:1.4px;background:#262729"></div>
<div class="a" style="left:0;top:344.2px;width:444px;height:1.4px;background:#262729"></div>
<div class="a" style="left:0;top:368.2px;width:444px;height:1.4px;background:#262729"></div>
<div class="a" style="left:0;top:392.2px;width:444px;height:1.4px;background:#262729"></div>
<div class="a" style="left:0;top:416.2px;width:444px;height:1.4px;background:#262729"></div>
<div class="a" style="left:0;top:440.2px;width:444px;height:1.4px;background:#262729"></div>
<div class="a" style="left:0;top:464.2px;width:444px;height:1.4px;background:#262729"></div>
<div class="a" style="left:0;top:488.2px;width:444px;height:1.4px;background:#262729"></div>
<div class="a" style="left:0;top:512.2px;width:444px;height:1.4px;background:#262729"></div>
<div class="a" style="left:2.0px;top:14.3px;width:1px;height:2.5px;background:#717378"></div>
<div class="a" style="left:9.6px;top:11px;width:1px;height:5.5px;background:#b0b2b6"></div>
<div class="a" style="left:10.1px;top:3.5px;font-size:6.6px;line-height:7px;color:#c0c3d4;white-space:nowrap">157</div>
<div class="a" style="left:17.2px;top:14.3px;width:1px;height:2.5px;background:#717378"></div>
<div class="a" style="left:24.8px;top:14.3px;width:1px;height:2.5px;background:#717378"></div>
<div class="a" style="left:32.3px;top:14.3px;width:1px;height:2.5px;background:#717378"></div>
<div class="a" style="left:39.9px;top:14.3px;width:1px;height:2.5px;background:#717378"></div>
<div class="a" style="left:47.5px;top:14.3px;width:1px;height:2.5px;background:#717378"></div>
<div class="a" style="left:55.1px;top:14.3px;width:1px;height:2.5px;background:#717378"></div>
<div class="a" style="left:62.6px;top:14.3px;width:1px;height:2.5px;background:#717378"></div>
<div class="a" style="left:70.2px;top:11px;width:1px;height:5.5px;background:#b0b2b6"></div>
<div class="a" style="left:70.7px;top:3.5px;font-size:6.6px;line-height:7px;color:#c0c3d4;white-space:nowrap">158</div>
<div class="a" style="left:77.8px;top:14.3px;width:1px;height:2.5px;background:#717378"></div>
<div class="a" style="left:85.4px;top:14.3px;width:1px;height:2.5px;background:#717378"></div>
<div class="a" style="left:92.9px;top:14.3px;width:1px;height:2.5px;background:#717378"></div>
<div class="a" style="left:100.5px;top:14.3px;width:1px;height:2.5px;background:#717378"></div>
<div class="a" style="left:108.1px;top:14.3px;width:1px;height:2.5px;background:#717378"></div>
<div class="a" style="left:115.7px;top:14.3px;width:1px;height:2.5px;background:#717378"></div>
<div class="a" style="left:123.2px;top:14.3px;width:1px;height:2.5px;background:#717378"></div>
<div class="a" style="left:130.8px;top:11px;width:1px;height:5.5px;background:#b0b2b6"></div>
<div class="a" style="left:131.3px;top:3.5px;font-size:6.6px;line-height:7px;color:#c0c3d4;white-space:nowrap">159</div>
<div class="a" style="left:138.4px;top:14.3px;width:1px;height:2.5px;background:#717378"></div>
<div class="a" style="left:146.0px;top:14.3px;width:1px;height:2.5px;background:#717378"></div>
<div class="a" style="left:153.5px;top:14.3px;width:1px;height:2.5px;background:#717378"></div>
<div class="a" style="left:161.1px;top:14.3px;width:1px;height:2.5px;background:#717378"></div>
<div class="a" style="left:168.7px;top:14.3px;width:1px;height:2.5px;background:#717378"></div>
<div class="a" style="left:176.2px;top:14.3px;width:1px;height:2.5px;background:#717378"></div>
<div class="a" style="left:183.8px;top:14.3px;width:1px;height:2.5px;background:#717378"></div>
<div class="a" style="left:191.4px;top:11px;width:1px;height:5.5px;background:#b0b2b6"></div>
<div class="a" style="left:191.9px;top:3.5px;font-size:6.6px;line-height:7px;color:#c0c3d4;white-space:nowrap">160</div>
<div class="a" style="left:199.0px;top:14.3px;width:1px;height:2.5px;background:#717378"></div>
<div class="a" style="left:206.6px;top:14.3px;width:1px;height:2.5px;background:#717378"></div>
<div class="a" style="left:214.1px;top:14.3px;width:1px;height:2.5px;background:#717378"></div>
<div class="a" style="left:221.7px;top:14.3px;width:1px;height:2.5px;background:#717378"></div>
<div class="a" style="left:229.3px;top:14.3px;width:1px;height:2.5px;background:#717378"></div>
<div class="a" style="left:236.9px;top:14.3px;width:1px;height:2.5px;background:#717378"></div>
<div class="a" style="left:244.4px;top:14.3px;width:1px;height:2.5px;background:#717378"></div>
<div class="a" style="left:252.0px;top:11px;width:1px;height:5.5px;background:#b0b2b6"></div>
<div class="a" style="left:252.5px;top:3.5px;font-size:6.6px;line-height:7px;color:#c0c3d4;white-space:nowrap">161</div>
<div class="a" style="left:259.6px;top:14.3px;width:1px;height:2.5px;background:#717378"></div>
<div class="a" style="left:267.2px;top:14.3px;width:1px;height:2.5px;background:#717378"></div>
<div class="a" style="left:274.7px;top:14.3px;width:1px;height:2.5px;background:#717378"></div>
<div class="a" style="left:282.3px;top:14.3px;width:1px;height:2.5px;background:#717378"></div>
<div class="a" style="left:289.9px;top:14.3px;width:1px;height:2.5px;background:#717378"></div>
<div class="a" style="left:297.5px;top:14.3px;width:1px;height:2.5px;background:#717378"></div>
<div class="a" style="left:305.0px;top:14.3px;width:1px;height:2.5px;background:#717378"></div>
<div class="a" style="left:312.6px;top:11px;width:1px;height:5.5px;background:#b0b2b6"></div>
<div class="a" style="left:313.1px;top:3.5px;font-size:6.6px;line-height:7px;color:#c0c3d4;white-space:nowrap">162</div>
<div class="a" style="left:320.2px;top:14.3px;width:1px;height:2.5px;background:#717378"></div>
<div class="a" style="left:327.8px;top:14.3px;width:1px;height:2.5px;background:#717378"></div>
<div class="a" style="left:335.3px;top:14.3px;width:1px;height:2.5px;background:#717378"></div>
<div class="a" style="left:342.9px;top:14.3px;width:1px;height:2.5px;background:#717378"></div>
<div class="a" style="left:350.5px;top:14.3px;width:1px;height:2.5px;background:#717378"></div>
<div class="a" style="left:358.0px;top:14.3px;width:1px;height:2.5px;background:#717378"></div>
<div class="a" style="left:365.6px;top:14.3px;width:1px;height:2.5px;background:#717378"></div>
<div class="a" style="left:373.2px;top:11px;width:1px;height:5.5px;background:#b0b2b6"></div>
<div class="a" style="left:373.7px;top:3.5px;font-size:6.6px;line-height:7px;color:#c0c3d4;white-space:nowrap">163</div>
<div class="a" style="left:380.8px;top:14.3px;width:1px;height:2.5px;background:#717378"></div>
<div class="a" style="left:388.4px;top:14.3px;width:1px;height:2.5px;background:#717378"></div>
<div class="a" style="left:395.9px;top:14.3px;width:1px;height:2.5px;background:#717378"></div>
<div class="a" style="left:403.5px;top:14.3px;width:1px;height:2.5px;background:#717378"></div>
<div class="a" style="left:411.1px;top:14.3px;width:1px;height:2.5px;background:#717378"></div>
<div class="a" style="left:418.7px;top:14.3px;width:1px;height:2.5px;background:#717378"></div>
<div class="a" style="left:426.2px;top:14.3px;width:1px;height:2.5px;background:#717378"></div>
<div class="a" style="left:433.8px;top:11px;width:1px;height:5.5px;background:#b0b2b6"></div>
<div class="a" style="left:434.3px;top:3.5px;font-size:6.6px;line-height:7px;color:#c0c3d4;white-space:nowrap">164</div>
<div class="a" style="left:441.4px;top:14.3px;width:1px;height:2.5px;background:#717378"></div>
<div class="a" style="left:0;top:17.5px;width:444px;height:31px;background:rgba(24,25,27,0.45)"></div>
<div class="a" style="left:0;top:33px;width:444px;height:1px;background:#2a2b2f"></div>
<svg class="a" style="left:0;top:30px" width="444" height="21" viewBox="0 0 444 21">
<path d="M0 13 L403 15.3 L403 7.6 L444 7.6 V19 H0Z" fill="#3a3d4c"/>
<path d="M0 12.9 L403 15.3" stroke="#b4b8c0" stroke-width="1.5" fill="none"/>
<path d="M403 7.6 H444" stroke="#b4b8c0" stroke-width="1.5" fill="none"/>
</svg>
<div class="a" style="left:0;top:48.8px;width:444px;height:2.2px;background:#17181a"></div>
<div class="a" style="left:405.79999999999995px;top:41.5px;font-size:6.6px;line-height:8px;color:#d6d8de">165</div>
<div class="a" style="left:384.79999999999995px;top:18px;width:18.6px;height:11.2px;background:#4ea8d4;clip-path:polygon(0 0,100% 0,100% 100%,28% 100%)"></div>
<div class="a" style="left:391px;top:20px;font-size:6px;line-height:7px;color:#2a5670">End</div>
<div class="a" style="left:403px;top:0;width:1px;height:514px;background:#9a9ca0"></div>
<div class="a" style="left:400.8px;top:35.3px;width:4.5px;height:4.5px;border-radius:50%;background:#e6e7ea"></div>
<div class="a" style="left:400.8px;top:43px;width:4.5px;height:4.5px;border-radius:50%;background:#e6e7ea"></div>
<div class="a" style="left:1px;top:51px;width:5px;height:5px;border-radius:50%;background:#1c58c4"></div>
<div class="a" style="left:9.6px;top:200.5px;width:60.0px;height:23.5px;background:#aaff96;overflow:hidden"><div class="a" style="left:0;top:0.3px;width:28px;height:6.8px;background:#64a25a;clip-path:polygon(0 0,100% 0,calc(100% - 3.5px) 100%,0 100%)"></div><div class="lbl" style="left:2.5px;top:0px;color:#eef2ea">Bass</div><div class="a" style="left:0;top:16.5px;width:16px;height:7px;background:#64a25a;clip-path:polygon(0 0,calc(100% - 3.5px) 0,100% 100%,0 100%)"></div><div class="a" style="left:5px;top:19px;width:3px;height:2.5px;border-radius:40%;background:#eef2ea;opacity:0.7"></div></div>
<div class="a" style="left:9.6px;top:224.5px;width:60.0px;height:23.5px;background:#00ebd2;overflow:hidden"><svg class="a" style="left:0;top:0" width="60.0" height="24" viewBox="0 0 60.0 24"><path d="M0 7 H60.0 V8.3 H0Z" fill="#10a08e"/><path d="M0 10.5 L8 11 L14 12.5 L38 16.3 L14 17.8 L14.5 24 H0Z" fill="#0d8a7a"/><circle cx="5.5" cy="20" r="1.6" fill="none" stroke="#7fe8da" stroke-width="0.8"/></svg><div class="a" style="left:0;top:0.3px;width:60.0px;height:6.8px;background:#0a9484;clip-path:polygon(0 0,100% 0,calc(100% - 3.5px) 100%,0 100%)"></div><div class="lbl" style="left:2.5px;top:0px;color:#eef2ea">Standard 808 (JW2)</div></div>
<div class="a" style="left:69.0px;top:200.5px;width:1.2px;height:47.5px;background:#3d6a55;"></div>
<div class="a" style="left:69.6px;top:200.5px;width:23.3px;height:23.5px;background:#aaff96;overflow:hidden"><div class="a" style="left:0;top:0.3px;width:22.299999999999955px;height:6.8px;background:#64a25a;clip-path:polygon(0 0,100% 0,calc(100% - 3.5px) 100%,0 100%)"></div><div class="lbl" style="left:2.5px;top:0px;color:#eef2ea">Bass</div><div class="a" style="left:0;top:16.5px;width:16px;height:7px;background:#64a25a;clip-path:polygon(0 0,calc(100% - 3.5px) 0,100% 100%,0 100%)"></div><div class="a" style="left:5px;top:19px;width:3px;height:2.5px;border-radius:40%;background:#eef2ea;opacity:0.7"></div></div>
<div class="a" style="left:69.6px;top:224.5px;width:23.3px;height:23.5px;background:#00ebd2;overflow:hidden"><svg class="a" style="left:0;top:0" width="23.3" height="24" viewBox="0 0 23.3 24"><path d="M0 7 H23.3 V8.3 H0Z" fill="#10a08e"/><path d="M0 10.5 L8 11 L14 12.5 L38 16.3 L14 17.8 L14.5 24 H0Z" fill="#0d8a7a"/><circle cx="5.5" cy="20" r="1.6" fill="none" stroke="#7fe8da" stroke-width="0.8"/></svg><div class="a" style="left:0;top:0.3px;width:23.299999999999955px;height:6.8px;background:#0a9484;clip-path:polygon(0 0,100% 0,calc(100% - 3.5px) 100%,0 100%)"></div><div class="lbl" style="left:2.5px;top:0px;color:#eef2ea">Standard 808</div></div>
<div class="a" style="left:92.3px;top:200.5px;width:1.2px;height:47.5px;background:#3d6a55;"></div>
<div class="a" style="left:92.9px;top:200.5px;width:22.3px;height:23.5px;background:#aaff96;overflow:hidden"><div class="a" style="left:0;top:0.3px;width:21.30000000000001px;height:6.8px;background:#64a25a;clip-path:polygon(0 0,100% 0,calc(100% - 3.5px) 100%,0 100%)"></div><div class="lbl" style="left:2.5px;top:0px;color:#eef2ea">Bass</div><div class="a" style="left:0;top:16.5px;width:16px;height:7px;background:#64a25a;clip-path:polygon(0 0,calc(100% - 3.5px) 0,100% 100%,0 100%)"></div><div class="a" style="left:5px;top:19px;width:3px;height:2.5px;border-radius:40%;background:#eef2ea;opacity:0.7"></div></div>
<div class="a" style="left:92.9px;top:224.5px;width:22.3px;height:23.5px;background:#00ebd2;overflow:hidden"><svg class="a" style="left:0;top:0" width="22.3" height="24" viewBox="0 0 22.3 24"><path d="M0 7 H22.3 V8.3 H0Z" fill="#10a08e"/><path d="M0 10.5 L8 11 L14 12.5 L38 16.3 L14 17.8 L14.5 24 H0Z" fill="#0d8a7a"/><circle cx="5.5" cy="20" r="1.6" fill="none" stroke="#7fe8da" stroke-width="0.8"/></svg><div class="a" style="left:0;top:0.3px;width:22.30000000000001px;height:6.8px;background:#0a9484;clip-path:polygon(0 0,100% 0,calc(100% - 3.5px) 100%,0 100%)"></div><div class="lbl" style="left:2.5px;top:0px;color:#eef2ea">Standard 808</div></div>
<div class="a" style="left:114.6px;top:200.5px;width:1.2px;height:47.5px;background:#3d6a55;"></div>
<div class="a" style="left:115.2px;top:200.5px;width:30.9px;height:23.5px;background:#aaff96;overflow:hidden"><div class="a" style="left:0;top:0.3px;width:28px;height:6.8px;background:#64a25a;clip-path:polygon(0 0,100% 0,calc(100% - 3.5px) 100%,0 100%)"></div><div class="lbl" style="left:2.5px;top:0px;color:#eef2ea">Bass</div><div class="a" style="left:0;top:16.5px;width:16px;height:7px;background:#64a25a;clip-path:polygon(0 0,calc(100% - 3.5px) 0,100% 100%,0 100%)"></div><div class="a" style="left:5px;top:19px;width:3px;height:2.5px;border-radius:40%;background:#eef2ea;opacity:0.7"></div></div>
<div class="a" style="left:115.2px;top:224.5px;width:30.9px;height:23.5px;background:#00ebd2;overflow:hidden"><svg class="a" style="left:0;top:0" width="30.9" height="24" viewBox="0 0 30.9 24"><path d="M0 7 H30.9 V8.3 H0Z" fill="#10a08e"/><path d="M0 10.5 L8 11 L14 12.5 L38 16.3 L14 17.8 L14.5 24 H0Z" fill="#0d8a7a"/><circle cx="5.5" cy="20" r="1.6" fill="none" stroke="#7fe8da" stroke-width="0.8"/></svg><div class="a" style="left:0;top:0.3px;width:30.900000000000034px;height:6.8px;background:#0a9484;clip-path:polygon(0 0,100% 0,calc(100% - 3.5px) 100%,0 100%)"></div><div class="lbl" style="left:2.5px;top:0px;color:#eef2ea">Standard 808</div></div>
<div class="a" style="left:145.5px;top:200.5px;width:1.2px;height:47.5px;background:#3d6a55;"></div>
<div class="a" style="left:146.1px;top:200.5px;width:74.9px;height:23.5px;background:#aaff96;overflow:hidden"><div class="a" style="left:0;top:0.3px;width:28px;height:6.8px;background:#64a25a;clip-path:polygon(0 0,100% 0,calc(100% - 3.5px) 100%,0 100%)"></div><div class="lbl" style="left:2.5px;top:0px;color:#eef2ea">Bass</div><div class="a" style="left:0;top:16.5px;width:16px;height:7px;background:#64a25a;clip-path:polygon(0 0,calc(100% - 3.5px) 0,100% 100%,0 100%)"></div><div class="a" style="left:5px;top:19px;width:3px;height:2.5px;border-radius:40%;background:#eef2ea;opacity:0.7"></div></div>
<div class="a" style="left:146.1px;top:224.5px;width:74.9px;height:23.5px;background:#00ebd2;overflow:hidden"><svg class="a" style="left:0;top:0" width="74.9" height="24" viewBox="0 0 74.9 24"><path d="M0 7 H74.9 V8.3 H0Z" fill="#10a08e"/><path d="M0 10.5 L8 11 L14 12.5 L38 16.3 L14 17.8 L14.5 24 H0Z" fill="#0d8a7a"/><circle cx="5.5" cy="20" r="1.6" fill="none" stroke="#7fe8da" stroke-width="0.8"/></svg><div class="a" style="left:0;top:0.3px;width:66px;height:6.8px;background:#0a9484;clip-path:polygon(0 0,100% 0,calc(100% - 3.5px) 100%,0 100%)"></div><div class="lbl" style="left:2.5px;top:0px;color:#eef2ea">Standard 808 (JW2)</div></div>
<div class="a" style="left:130.8px;top:248.5px;width:60.6px;height:23.5px;background:#aaff96;overflow:hidden"><div class="a" style="left:0;top:0.3px;width:42px;height:6.8px;background:#64a25a;clip-path:polygon(0 0,100% 0,calc(100% - 3.5px) 100%,0 100%)"></div><div class="lbl" style="left:2.5px;top:0px;color:#eef2ea">Pad Sounds</div><div class="a" style="left:0;top:16.5px;width:16px;height:7px;background:#64a25a;clip-path:polygon(0 0,calc(100% - 3.5px) 0,100% 100%,0 100%)"></div><div class="a" style="left:5px;top:19px;width:3px;height:2.5px;border-radius:40%;background:#eef2ea;opacity:0.7"></div></div>
<div class="a" style="left:130.8px;top:296.5px;width:60.6px;height:23.5px;background:#0ac8f0;overflow:hidden"><svg class="a" style="left:0;top:0" width="62" height="24" viewBox="0 0 62 24"><path d="M14.5 14.6 L56.5 11.4" stroke="#0e4a5c" stroke-width="0.8"/><path d="M20 14.2 L30 13.5" stroke="#0e3e4c" stroke-width="1.6"/><path d="M38.5 12.8 L48 12" stroke="#3a4a40" stroke-width="1.6"/></svg><div class="a" style="left:0;top:0.3px;width:37px;height:6.8px;background:#107ea4;clip-path:polygon(0 0,100% 0,calc(100% - 3.5px) 100%,0 100%)"></div><div class="lbl" style="left:2.5px;top:0px;color:#eef2ea">Kontakt 7</div></div>
<div class="a" style="left:0.0px;top:368.5px;width:327.6px;height:23.5px;background:#e1ff00;overflow:hidden"></div>
<div class="a" style="left:0.0px;top:392.5px;width:236.5px;height:23.5px;background:#91ff14;overflow:hidden"><svg class="a" style="left:0;top:0" width="240" height="24" viewBox="0 0 240 24"><path d="M31 6.2 H143" stroke="#4a9612" stroke-width="0.8" stroke-dasharray="4 0.6 2 1 3 0.5 1 1"/><path d="M16 16.8 H140" stroke="#4a9612" stroke-width="0.8" stroke-dasharray="3 0.5 5 1 2 0.5 1 1"/></svg><div class="a" style="left:0;top:0.3px;width:31px;height:6.8px;background:#5aa416;clip-path:polygon(0 0,100% 0,calc(100% - 3.5px) 100%,0 100%)"></div><div class="lbl" style="left:2.5px;top:0px;color:#eef2ea">e Fall FX</div></div>
<div class="a" style="left:0.0px;top:408.5px;width:6.5px;height:7.0px;background:#5aa416;clip-path:polygon(0 0,40% 0,100% 100%,0 100%)"></div>
<div class="a" style="left:0.0px;top:416.5px;width:24.4px;height:23.5px;background:#91ff14;overflow:hidden"><svg class="a" style="left:0;top:0" width="24" height="24" viewBox="0 0 24 24"><path d="M3 6.5 H11" stroke="#4a9a14" stroke-width="0.8" stroke-dasharray="1 1"/><path d="M0 16.5 H11" stroke="#4a9a14" stroke-width="0.8"/></svg></div>
<div class="a" style="left:24.4px;top:416.5px;width:242.5px;height:23.5px;background:#91ff14;overflow:hidden"><svg class="a" style="left:0;top:0" width="243" height="24" viewBox="0 0 243 24"><path d="M100 7.2 H228" stroke="#4a9612" stroke-width="0.8" stroke-dasharray="4 0.6 2 1 3 0.5 1 1"/><path d="M112 17.3 H222" stroke="#4a9612" stroke-width="0.8" stroke-dasharray="3 0.5 5 1 2 0.5 1 1"/></svg><div class="a" style="left:0;top:0.3px;width:38px;height:6.8px;background:#5aa416;clip-path:polygon(0 0,100% 0,calc(100% - 3.5px) 100%,0 100%)"></div><div class="lbl" style="left:2.5px;top:0px;color:#eef2ea">Ice Fall FX</div><div class="a" style="left:0;top:16.5px;width:16px;height:7px;background:#5aa416;clip-path:polygon(0 0,calc(100% - 3.5px) 0,100% 100%,0 100%)"></div><div class="a" style="left:5px;top:19px;width:3px;height:2.5px;border-radius:40%;background:#eef2ea;opacity:0.7"></div></div>
<div class="a" style="left:23.9px;top:416.5px;width:1.0px;height:23.5px;background:#4f9a18;"></div>
<div class="a" style="left:251.2px;top:464.5px;width:76.4px;height:23.5px;background:#e1ff00;overflow:hidden"><div class="a" style="left:0;top:0.3px;width:65px;height:6.8px;background:#8a9a24;clip-path:polygon(0 0,100% 0,calc(100% - 3.5px) 100%,0 100%)"></div><div class="lbl" style="left:2.5px;top:0px;color:#eef2ea">Playstation 2 Sound</div><div class="a" style="left:0;top:16.5px;width:16px;height:7px;background:#8a9a24;clip-path:polygon(0 0,calc(100% - 3.5px) 0,100% 100%,0 100%)"></div><div class="a" style="left:5px;top:19px;width:3px;height:2.5px;border-radius:40%;background:#eef2ea;opacity:0.7"></div></div>
</div>
</div></body></html>
